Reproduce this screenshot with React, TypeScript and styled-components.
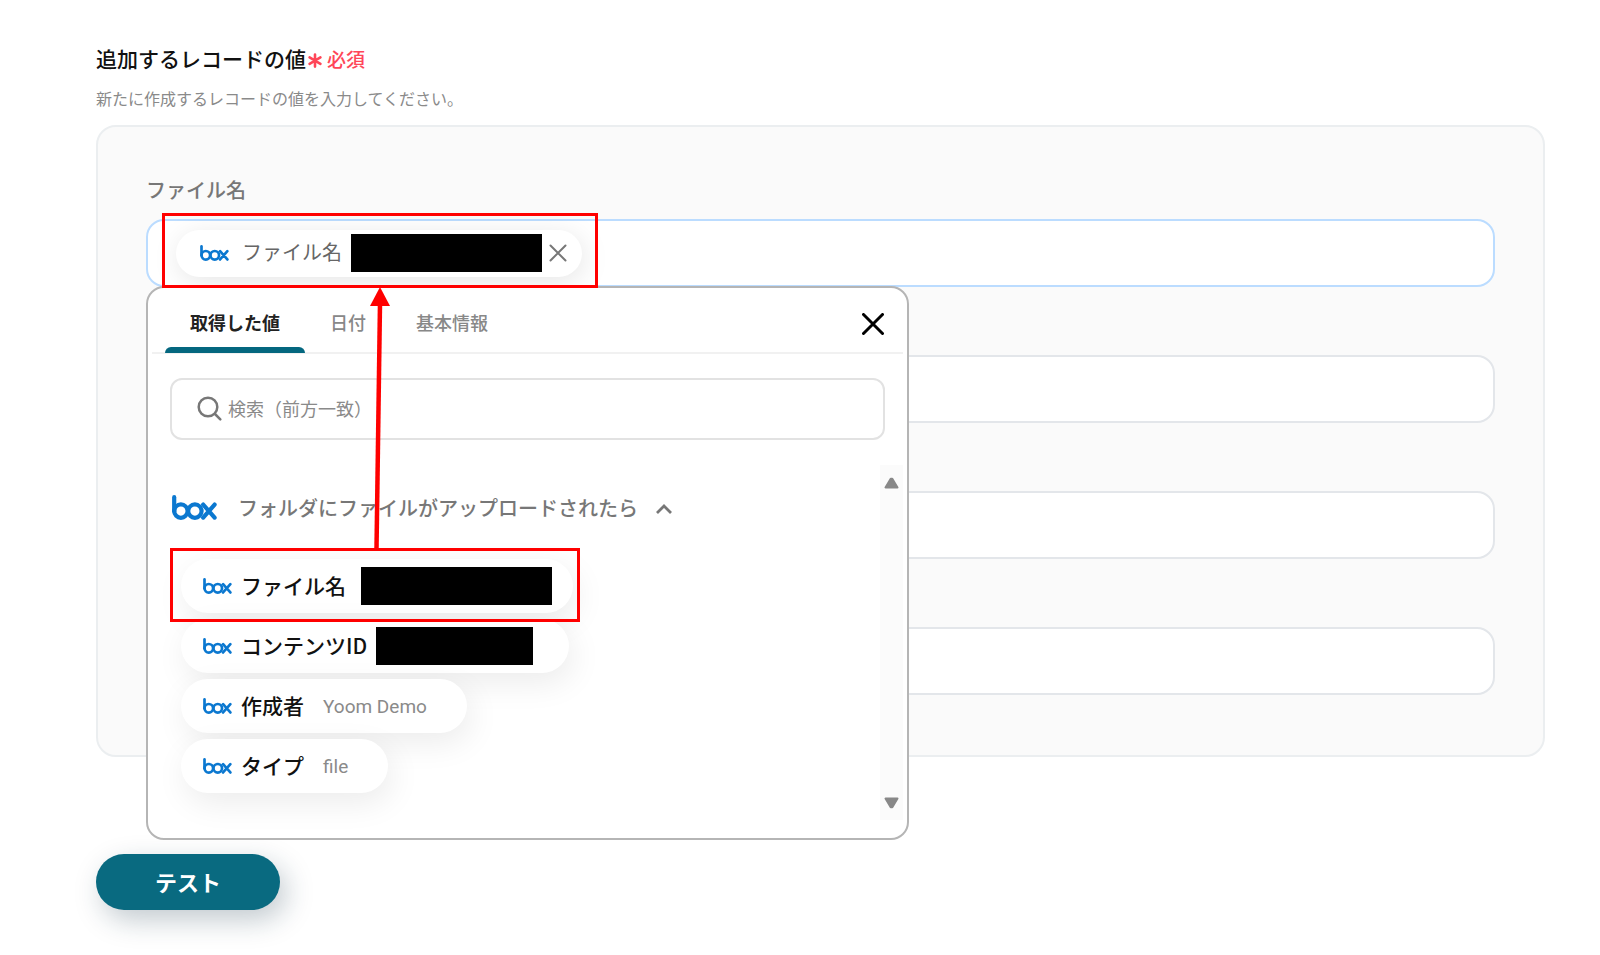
import React from "react";
import styled, { createGlobalStyle, css } from "styled-components";

const GlobalStyle = createGlobalStyle`
  *, *::before, *::after { box-sizing: border-box; }
  body {
    margin: 0;
    background: #fff;
    color: #222;
    font-family: "Noto Sans CJK JP", sans-serif;
  }
  button, input { font: inherit; color: inherit; }
  button { border: 0; padding: 0; background: none; cursor: pointer; }
  input { outline: none; }
`;

const Page = styled.main`
  padding: 41px 55px 46px 96px;
`;

const Heading = styled.h1`
  display: flex;
  align-items: center;
  gap: 2px;
  margin: 0;
  font-size: 21px;
  line-height: 32px;
  font-weight: 500;
  color: #111;
`;

const Required = styled.span`
  display: inline-flex;
  align-items: center;
  gap: 5px;
  padding-top: 2px;
  font-size: 19px;
  color: #ff4658;
`;

const Description = styled.p`
  margin: 10px 0 14px;
  font-size: 16px;
  line-height: 26px;
  color: #8a8a8a;
`;

const Panel = styled.section`
  display: flex;
  flex-direction: column;
  gap: 68px;
  padding: 48px 48px 60px;
  border: 2px solid #ebeef0;
  border-radius: 20px;
  background: #fafafa;
`;

const Field = styled.div`
  position: relative;
  display: flex;
  flex-direction: column;
`;

const Label = styled.label`
  margin-bottom: 14px;
  font-size: 20px;
  line-height: 30px;
  font-weight: 500;
  color: #777;
`;

const inputFrame = css`
  height: 68px;
  border: 2px solid #e3e6ea;
  border-radius: 18px;
  background: #fff;
`;

const TextInput = styled.input`
  ${inputFrame}
  width: 100%;
  padding: 0 28px;
`;

const TokenInput = styled.div`
  ${inputFrame}
  display: flex;
  align-items: center;
  border-color: #bbdcff;
  padding: 0 28px;

  input {
    flex: 1;
    min-width: 0;
    height: 100%;
    border: 0;
    background: none;
    padding: 0 16px;
  }
`;

const Token = styled.span`
  display: flex;
  align-items: center;
  height: 47px;
  padding: 0 15px 0 24px;
  border-radius: 24px;
  background: #fff;
  box-shadow: 2px 5px 28px rgba(0, 0, 0, 0.1);
  font-size: 20px;
  color: #666;
`;

const TokenName = styled.span`
  margin: 0 9px 0 13px;
  padding-bottom: 3px;
  white-space: nowrap;
`;

const Redacted = styled.span<{ $width: number }>`
  width: ${(p) => p.$width}px;
  height: 38px;
  background: #000;
`;

const IconButton = styled.button`
  display: inline-flex;
`;

const RemoveButton = styled(IconButton)`
  margin-left: 7px;
`;

const Popover = styled.div`
  position: absolute;
  top: 100%;
  left: 0;
  z-index: 1;
  width: 763px;
  max-width: 100%;
  margin-top: -1px;
  padding: 0 4px 18px;
  border: 2px solid #b5b5b5;
  border-radius: 18px;
  background: #fff;
`;

const TabBar = styled.div`
  display: flex;
  align-items: stretch;
  height: 66px;
  padding: 0 19px 0 13px;
  border-bottom: 2px solid #f1f1f1;
`;

const Tab = styled.button<{ $active?: boolean }>`
  display: grid;
  grid-template-rows: 1fr 6px;
  align-items: center;
  margin-bottom: -1px;
  padding-top: 8px;
  font-size: 18px;
  font-weight: ${(p) => (p.$active ? 700 : 500)};
  color: ${(p) => (p.$active ? "#222" : "#888")};

  span { padding: 0 25px; }

  &::after {
    content: "";
    height: 6px;
    border-radius: 6px 6px 0 0;
    background: ${(p) => (p.$active ? "#04677f" : "transparent")};
  }
`;

const CloseButton = styled(IconButton)`
  align-items: center;
  margin-left: auto;
  padding-top: 8px;
`;

const SearchBox = styled.label`
  display: flex;
  align-items: center;
  gap: 6px;
  height: 62px;
  margin: 24px 18px 25px;
  padding: 0 25px 2px;
  border: 2px solid #e2e2e2;
  border-radius: 12px;

  input {
    flex: 1;
    min-width: 0;
    border: 0;
    padding: 0;
    font-size: 18px;
    line-height: 28px;
  }
  input::placeholder { color: #8a8a8a; opacity: 1; }
`;

const Scroller = styled.div`
  display: flex;
  height: 355px;
`;

const Results = styled.div`
  flex: 1;
  min-width: 0;
  padding: 24px 0 0 20px;
`;

const ScrollTrack = styled.div`
  display: flex;
  flex-direction: column;
  align-items: center;
  justify-content: space-between;
  width: 23px;
  padding: 12px 0 11px;
  background: #fbfbfb;
`;

const GroupToggle = styled.button`
  display: flex;
  align-items: center;
  height: 36px;
  font-size: 20px;
  font-weight: 500;
  color: #777;

  svg:last-child { margin-top: 4px; }
`;

const GroupName = styled.span`
  margin: 0 18px 0 21px;
  white-space: nowrap;
`;

const OptionList = styled.ul`
  display: flex;
  flex-direction: column;
  align-items: flex-start;
  gap: 6px;
  margin: 0;
  padding: 34px 0 0 9px;
  list-style: none;
`;

const Option = styled.button<{ $end: number }>`
  display: flex;
  align-items: center;
  height: 54px;
  padding: 0 ${(p) => p.$end}px 0 22px;
  border-radius: 27px;
  background: #fff;
  box-shadow: 4px 10px 32px rgba(0, 0, 0, 0.08);
`;

const OptionName = styled.span`
  margin-left: 9px;
  padding-bottom: 2px;
  font-size: 21px;
  font-weight: 500;
  color: #111;
  white-space: nowrap;
`;

const OptionValue = styled.span<{ $gap: number }>`
  display: flex;
  margin-left: ${(p) => p.$gap}px;
  font-family: Roboto, sans-serif;
  font-size: 19px;
  color: #8a8a8a;
`;

const Highlight = styled.span<{ $x: number; $y: number; $w: number; $h: number }>`
  position: absolute;
  left: ${(p) => p.$x}px;
  top: ${(p) => p.$y}px;
  z-index: 2;
  width: ${(p) => p.$w}px;
  height: ${(p) => p.$h}px;
  border: 3px solid #f00;
  pointer-events: none;
`;

const Arrow = styled.svg`
  position: absolute;
  left: 224px;
  top: 112px;
  z-index: 2;
  pointer-events: none;
`;

const TestButton = styled.button`
  display: block;
  width: 184px;
  height: 56px;
  margin-top: 97px;
  padding-bottom: 3px;
  border-radius: 28px;
  background: #096a80;
  box-shadow: 6px 10px 28px rgba(20, 50, 70, 0.26);
  font-size: 22px;
  font-weight: 700;
  color: #fff;
`;

function BoxLogo({ width, height }: { width: number; height: number }) {
  return (
    <svg width={width} height={height} viewBox="0 0 45 25" fill="none" stroke="#0b78d0" strokeWidth="4.2" strokeLinecap="round" role="img" aria-label="box">
      <path d="M2.2 2.2v14" />
      <circle cx="8.9" cy="16.1" r="6.7" />
      <circle cx="22.9" cy="16.1" r="6.7" />
      <path d="M31.2 9.6 42.6 22.6M42.6 9.6 31.2 22.6" />
    </svg>
  );
}

function Cross({ size, stroke, color }: { size: number; stroke: number; color: string }) {
  return (
    <svg width={size} height={size} viewBox={`0 0 ${size} ${size}`} stroke={color} strokeWidth={stroke} strokeLinecap="round" aria-hidden="true">
      <path d={`M1.5 1.5 ${size - 1.5} ${size - 1.5}M${size - 1.5} 1.5 1.5 ${size - 1.5}`} />
    </svg>
  );
}

function Asterisk() {
  return (
    <svg width="14" height="18" viewBox="0 0 14 18" stroke="#ff4658" strokeWidth="2.6" strokeLinecap="round" aria-hidden="true">
      <path d="M7 4.6v12M1.6 7.4l10.8 6.4M12.4 7.4 1.6 13.8" />
    </svg>
  );
}

function Triangle({ down }: { down?: boolean }) {
  return (
    <svg width="15" height="12" viewBox="0 0 15 12" fill="#888" stroke="#888" strokeWidth="2" strokeLinejoin="round" aria-hidden="true">
      <path d={down ? "M1.5 1.5h12L8.3 10.3H6.7z" : "M1.5 10.5h12L8.3 1.7H6.7z"} />
    </svg>
  );
}

const options = [
  { name: "ファイル名", redacted: 191, gap: 15, end: 21 },
  { name: "コンテンツID", redacted: 157, gap: 9, end: 36 },
  { name: "作成者", value: "Yoom Demo", gap: 19, end: 40 },
  { name: "タイプ", value: "file", gap: 19, end: 40 },
];

const otherFields = ["フィールド2", "フィールド3", "フィールド4"];

export default function App() {
  return (
    <Page>
      <GlobalStyle />
      <Heading>
        追加するレコードの値
        <Required>
          <Asterisk />
          必須
        </Required>
      </Heading>
      <Description>新たに作成するレコードの値を入力してください。</Description>

      <Panel>
        <Field>
          <Label htmlFor="file-name">ファイル名</Label>
          <TokenInput>
            <Token>
              <BoxLogo width={29} height={16} />
              <TokenName>ファイル名</TokenName>
              <Redacted $width={191} />
              <RemoveButton type="button" aria-label="削除">
                <Cross size={18} stroke={2} color="#777" />
              </RemoveButton>
            </Token>
            <input id="file-name" type="text" />
          </TokenInput>
          <Popover>
            <TabBar role="tablist">
              <Tab type="button" role="tab" aria-selected="true" $active><span>取得した値</span></Tab>
              <Tab type="button" role="tab" aria-selected="false"><span>日付</span></Tab>
              <Tab type="button" role="tab" aria-selected="false"><span>基本情報</span></Tab>
              <CloseButton type="button" aria-label="閉じる">
                <Cross size={22} stroke={3} color="#000" />
              </CloseButton>
            </TabBar>
            <SearchBox>
              <svg width="25" height="25" viewBox="0 0 25 25" fill="none" stroke="#777" strokeWidth="2.5" strokeLinecap="round" aria-hidden="true">
                <circle cx="11" cy="11" r="9.3" />
                <path d="m18 18 5.3 5.3" />
              </svg>
              <input type="text" placeholder="検索（前方一致）" aria-label="検索" />
            </SearchBox>
            <Scroller>
              <Results>
                <GroupToggle type="button" aria-expanded="true">
                  <BoxLogo width={45} height={25} />
                  <GroupName>フォルダにファイルがアップロードされたら</GroupName>
                  <svg width="16" height="10" viewBox="0 0 16 10" fill="none" stroke="#777" strokeWidth="2.8" aria-hidden="true">
                    <path d="m1 9 7-7 7 7" />
                  </svg>
                </GroupToggle>
                <OptionList>
                  {options.map((o) => (
                    <li key={o.name}>
                      <Option type="button" $end={o.end}>
                        <BoxLogo width={29} height={16} />
                        <OptionName>{o.name}</OptionName>
                        <OptionValue $gap={o.gap}>
                          {o.redacted ? <Redacted $width={o.redacted} /> : o.value}
                        </OptionValue>
                      </Option>
                    </li>
                  ))}
                </OptionList>
              </Results>
              <ScrollTrack>
                <Triangle />
                <Triangle down />
              </ScrollTrack>
            </Scroller>
          </Popover>
          <Highlight $x={16} $y={38} $w={436} $h={75} />
          <Highlight $x={24} $y={373} $w={410} $h={74} />
          <Arrow width="20" height="262" viewBox="0 0 20 262" aria-hidden="true">
            <path d="M10 16 6.5 262" stroke="#f00" strokeWidth="4.5" />
            <path d="M10 0 20 19H0z" fill="#f00" />
          </Arrow>
        </Field>
        {otherFields.map((name) => (
          <TextInput key={name} type="text" aria-label={name} />
        ))}
      </Panel>

      <TestButton type="button">テスト</TestButton>
    </Page>
  );
}
